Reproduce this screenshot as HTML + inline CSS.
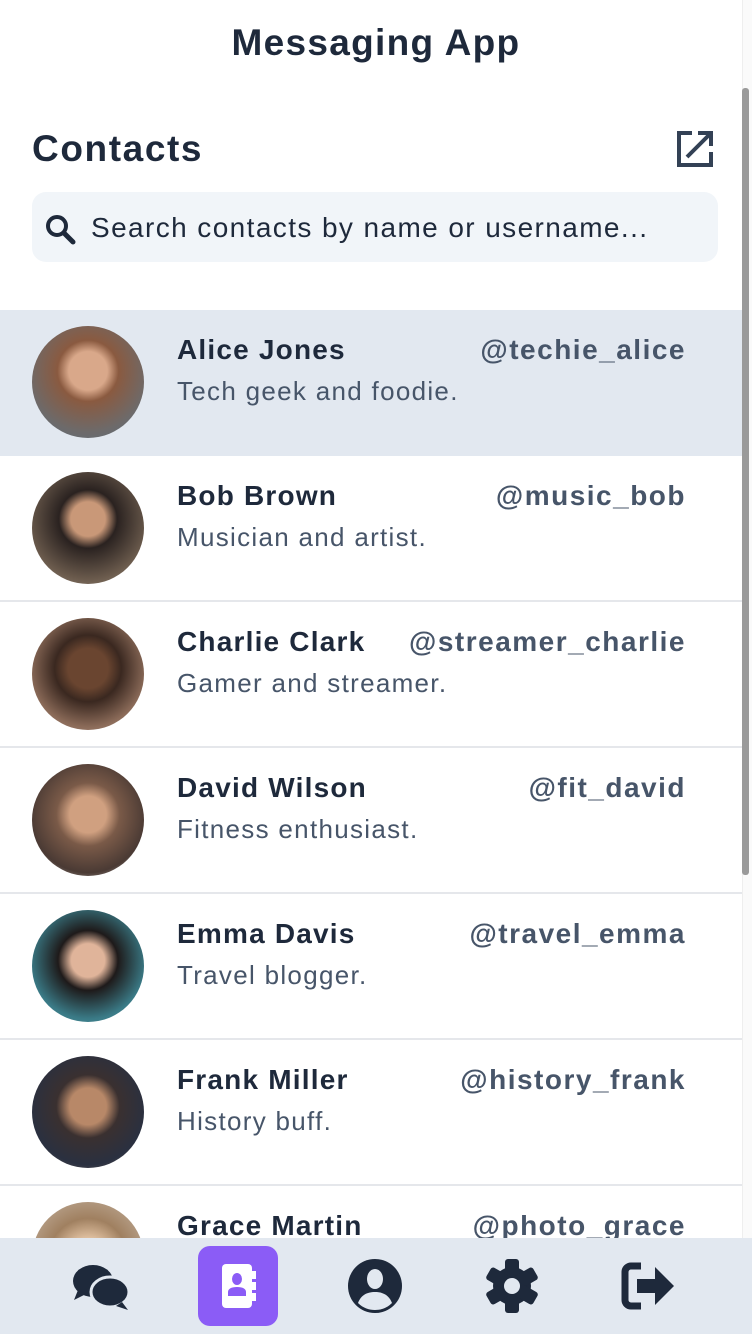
<!DOCTYPE html>
<html><head><style>
*{box-sizing:border-box;margin:0;padding:0}
body{width:752px;height:1334px;overflow:hidden;background:#fff;font-family:"Liberation Sans",Arial,sans-serif;position:relative;color:#1e293b}
.title{position:absolute;top:22px;left:0;width:752px;text-align:center;font-size:37px;font-weight:bold;color:#1e293b;letter-spacing:1.3px}
.h{position:absolute;left:32px;top:128px;font-size:37px;font-weight:bold;letter-spacing:1.6px}
.ext{position:absolute;left:676px;top:130px}
.search{position:absolute;left:32px;top:192px;width:686px;height:70px;background:#f1f5f9;border-radius:14px}
.search span{position:absolute;left:59px;top:20px;font-size:28px;color:#1e293b;letter-spacing:1.4px;white-space:nowrap}
.search svg{position:absolute;left:12px;top:21px}
.row{position:absolute;left:0;width:742px;height:146px;border-bottom:2px solid #e5e7eb}
.av{position:absolute;left:32px;top:16px;width:112px;height:112px;border-radius:50%}
.nm{position:absolute;left:177px;top:24px;font-size:28px;font-weight:bold;color:#1e293b;letter-spacing:1.2px}
.un{position:absolute;right:56px;top:24px;font-size:28px;font-weight:bold;color:#475569;letter-spacing:1.5px}
.bio{position:absolute;left:177px;top:66px;font-size:26px;color:#475569;letter-spacing:1.3px}
.sb{position:absolute;left:742px;top:0;width:10px;height:1238px;background:#fafafa;border-left:1px solid #eee}
.th{position:absolute;left:742px;top:88px;width:7px;height:787px;background:#9a9a9a;border-radius:3px}
.nav{position:absolute;left:0;top:1238px;width:752px;height:96px;background:#e2e8f0}
.nav svg{position:absolute}
</style></head><body>
<div class="title">Messaging App</div>
<div class="h">Contacts</div>
<svg class="ext" width="38" height="38" viewBox="0 0 38 38" fill="none" stroke="#334155" stroke-width="4"><path d="M16 3H3v32h32V22"/><path d="M11 27L34 4M22 3h13v13"/></svg>
<div class="search"><svg width="32" height="32" viewBox="0 0 32 32"><circle cx="13" cy="13" r="9" fill="none" stroke="#1e293b" stroke-width="4"/><path d="M20 20l9 9" stroke="#1e293b" stroke-width="5" stroke-linecap="round"/></svg><span>Search contacts by name or username...</span></div>

<div class="row" style="top:310px;background:#e2e8f0;border-bottom:none"><div class="av" style="background:radial-gradient(circle at 50% 40%,#d9a88a 0 22%,#8a5a40 35%,#6d6a6a 70%,#5a6f80)"></div><div class="nm">Alice Jones</div><div class="un">@techie_alice</div><div class="bio">Tech geek and foodie.</div></div>
<div class="row" style="top:456px"><div class="av" style="background:radial-gradient(circle at 50% 42%,#c99878 0 20%,#2a2220 34%,#6a5a4c 70%,#a09080)"></div><div class="nm">Bob Brown</div><div class="un">@music_bob</div><div class="bio">Musician and artist.</div></div>
<div class="row" style="top:602px"><div class="av" style="background:radial-gradient(circle at 50% 45%,#6a4530 0 24%,#3a2820 40%,#8a6a58 70%,#c0a090)"></div><div class="nm">Charlie Clark</div><div class="un">@streamer_charlie</div><div class="bio">Gamer and streamer.</div></div>
<div class="row" style="top:748px"><div class="av" style="background:radial-gradient(circle at 50% 45%,#d0a080 0 22%,#7a5a48 38%,#4a3a34 70%,#e8e4e0)"></div><div class="nm">David Wilson</div><div class="un">@fit_david</div><div class="bio">Fitness enthusiast.</div></div>
<div class="row" style="top:894px"><div class="av" style="background:radial-gradient(circle at 50% 45%,#e0b49a 0 20%,#1e1a1a 36%,#3a7a86 70%,#5aa0aa)"></div><div class="nm">Emma Davis</div><div class="un">@travel_emma</div><div class="bio">Travel blogger.</div></div>
<div class="row" style="top:1040px"><div class="av" style="background:radial-gradient(circle at 50% 45%,#b88868 0 22%,#3a3030 38%,#2a3040 70%,#7a6a60)"></div><div class="nm">Frank Miller</div><div class="un">@history_frank</div><div class="bio">History buff.</div></div>
<div class="row" style="top:1186px;border:none"><div class="av" style="background:radial-gradient(circle at 50% 50%,#e0c0a0 0 25%,#a08060 50%,#c8b8a8)"></div><div class="nm">Grace Martin</div><div class="un">@photo_grace</div><div class="bio">Photographer.</div></div>

<div class="sb"></div><div class="th"></div>
<div class="nav">
<svg style="left:72px;top:26px" width="58" height="46" viewBox="0 0 58 46"><ellipse cx="21" cy="17" rx="20" ry="16" fill="#1e293b"/><path d="M6 26l-4 10 12-6z" fill="#1e293b"/><ellipse cx="38" cy="28" rx="19" ry="15" fill="#1e293b" stroke="#e2e8f0" stroke-width="3"/><path d="M50 38l6 8-12-4z" fill="#1e293b"/></svg>
<div style="position:absolute;left:198px;top:8px;width:80px;height:80px;background:#8b5cf6;border-radius:12px"></div>
<svg style="left:211px;top:21px" width="54" height="54" viewBox="0 0 54 54"><rect x="11" y="5" width="30" height="44" rx="4" fill="#fff"/><rect x="41" y="12" width="4" height="8" fill="#fff"/><rect x="41" y="23" width="4" height="8" fill="#fff"/><rect x="41" y="34" width="4" height="8" fill="#fff"/><ellipse cx="26" cy="20" rx="5" ry="6" fill="#8b5cf6"/><path d="M17 37v-4c0-3 3-5 9-5s9 2 9 5v4z" fill="#8b5cf6"/></svg>
<svg style="left:347px;top:20px" width="56" height="56" viewBox="0 0 56 56"><ellipse cx="28" cy="28" rx="27" ry="27" fill="#1e293b"/><ellipse cx="28" cy="21" rx="8" ry="10" fill="#e2e8f0"/><path d="M11 45c3-8 9-11 17-11s14 3 17 11c-5 5-11 7-17 7s-12-2-17-7z" fill="#e2e8f0"/></svg>
<svg style="left:484px;top:20px" width="56" height="56" viewBox="-28 -28 56 56"><g fill="#1e293b"><circle r="19"/><rect x="-7" y="-27" width="14" height="54" rx="3"/><rect x="-7" y="-27" width="14" height="54" rx="3" transform="rotate(60)"/><rect x="-7" y="-27" width="14" height="54" rx="3" transform="rotate(-60)"/></g><circle r="8" fill="#e2e8f0"/></svg>
<svg style="left:621px;top:24px" width="56" height="48" viewBox="0 0 56 48"><path d="M20 4H10a6 6 0 0 0-6 6v28a6 6 0 0 0 6 6h10" fill="none" stroke="#1e293b" stroke-width="7"/><path d="M16 17h18V5l19 19-19 19V31H16z" fill="#1e293b"/></svg>
</div>
</body></html>
